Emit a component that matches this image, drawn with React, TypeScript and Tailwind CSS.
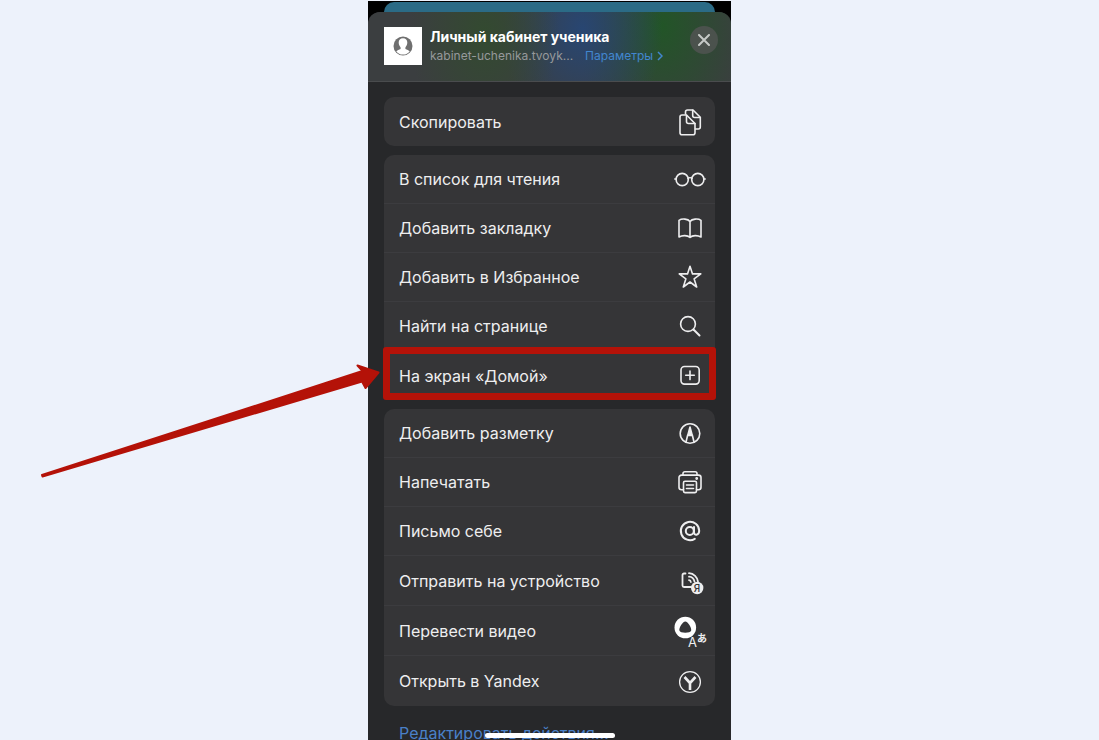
import type { ReactNode } from "react";

type Action = {
	label: string;
	icon: ReactNode;
	tall?: boolean;
	marked?: boolean;
};

function Icon({ children }: { children: ReactNode }) {
	return (
		<svg
			width="32"
			height="32"
			viewBox="0 0 32 32"
			fill="none"
			stroke="currentColor"
			strokeWidth="1.6"
			strokeLinecap="round"
			strokeLinejoin="round"
			className="shrink-0 overflow-visible"
			aria-hidden="true"
		>
			{children}
		</svg>
	);
}

const copyActions: Action[] = [
	{
		label: "Скопировать",
		icon: (
			<Icon>
				<path d="M11.500 8V6a2 2 0 0 1 2-2H19l7.300 7.300V21a2 2 0 0 1-2 2H21.500" />
				<path d="M18.700 4.300V9.500a2 2 0 0 0 2 2H26" />
				<path d="M8 9h4.500l8.500 8.500V26.800a2 2 0 0 1-2 2H8a2 2 0 0 1-2-2V11a2 2 0 0 1 2-2z" />
				<path d="M12.500 9.300V15.500a2 2 0 0 0 2 2H21" />
			</Icon>
		),
	},
];

const pageActions: Action[] = [
	{
		label: "В список для чтения",
		icon: (
			<Icon>
				<circle cx="8.200" cy="16.500" r="6.100" />
				<circle cx="23.800" cy="16.500" r="6.100" />
				<path d="M14 15.500c1-1 3-1 4 0M.8 16h1.300M29.900 16h1.300" />
			</Icon>
		),
	},
	{
		label: "Добавить закладку",
		icon: (
			<Icon>
				<path d="M16 9.500C14 6.800 8 6.300 5 8.300V25c3.500-2 8.500-1.800 11 .3 2.500-2.100 7.500-2.300 11-.3V8.300c-3-2-9-1.500-11 1.200zM16 9.500v15.500" />
			</Icon>
		),
	},
	{
		label: "Добавить в Избранное",
		icon: (
			<Icon>
				<path d="M16 5.200l2.500 7.700h8.300l-6.700 4.900 2.600 8.200-6.700-5-6.700 5 2.600-8.200-6.700-4.900h8.300z" />
			</Icon>
		),
	},
	{
		label: "Найти на странице",
		icon: (
			<Icon>
				<circle cx="14" cy="14" r="7.400" />
				<path d="M19.500 19.500l6 6" strokeWidth="2" />
			</Icon>
		),
	},
	{
		label: "На экран «Домой»",
		marked: true,
		icon: (
			<Icon>
				<rect x="7" y="6.500" width="18.200" height="17.600" rx="3.500" />
				<path d="M16 11v8.600M11.700 15.300h8.600" />
			</Icon>
		),
	},
];

const appActions: Action[] = [
	{
		label: "Добавить разметку",
		icon: (
			<Icon>
				<circle cx="16" cy="16.500" r="9.800" />
				<path d="M13.700 18L12 25M18.300 18L20 25M13.500 18.500h5" />
				<path d="M14 17.500L16 10l2 7.500z" fill="currentColor" />
			</Icon>
		),
	},
	{
		label: "Напечатать",
		icon: (
			<Icon>
				<path d="M9 9V7.500A1.800 1.800 0 0 1 10.800 5.700h10.400A1.800 1.800 0 0 1 23 7.500V9" />
				<path d="M9.500 23.800H7.500a2.500 2.500 0 0 1-2.500-2.500v-9.700a2.500 2.500 0 0 1 2.500-2.500h17a2.500 2.500 0 0 1 2.500 2.500v9.700a2.500 2.500 0 0 1-2.500 2.500h-2" />
				<rect x="9.500" y="15.300" width="13" height="11.300" rx="1.500" />
				<path d="M12.500 19h7M12.500 22.500h7" />
				<circle cx="22.700" cy="12.500" r=".6" fill="currentColor" />
			</Icon>
		),
	},
	{
		label: "Письмо себе",
		icon: (
			<Icon>
				<g strokeWidth="2">
					<circle cx="15.800" cy="16" r="4" />
					<path d="M20 12v5.200c0 3.800 5.200 3.200 5.200-1.400a9.200 9.200 0 1 0-4.400 8" />
				</g>
			</Icon>
		),
	},
	{
		label: "Отправить на устройство",
		tall: true,
		icon: (
			<Icon>
				<path d="M11.500 8.500H10A1.500 1.500 0 0 0 8.500 10v10.500A1.500 1.500 0 0 0 10 22h7" strokeWidth="1.800" />
				<path d="M15 8.200a9.500 9.500 0 0 1 9 8.500M15 11.700a6 6 0 0 1 5.500 5M15 15.200a2 2 0 0 1 1.800 1.800" strokeWidth="1.800" />
				<circle cx="23.200" cy="23" r="6.200" fill="currentColor" stroke="none" />
				<text
					x="23"
					y="26.500"
					textAnchor="middle"
					fill="#353537"
					stroke="none"
					className="font-['Inter'] text-[10px] font-medium"
				>
					Я
				</text>
			</Icon>
		),
	},
	{
		label: "Перевести видео",
		tall: true,
		icon: (
			<Icon>
				<circle cx="11.300" cy="12.500" r="10.800" fill="#fff" stroke="none" />
				<path
					d="M11.300 6.500c2.600 0 6.500 6.500 5.900 9-.6 3-11.200 3-11.800 0-.6-2.500 3.300-9 5.900-9z"
					fill="#353537"
					stroke="none"
				/>
				<g fill="currentColor" stroke="none">
					<text x="14" y="32" className="font-['Inter'] text-[13px]">
						A
					</text>
					<text x="23" y="27" className="font-['Noto_Sans_CJK_JP',sans-serif] text-[10px] font-bold">
						あ
					</text>
				</g>
			</Icon>
		),
	},
	{
		label: "Открыть в Yandex",
		tall: true,
		icon: (
			<Icon>
				<circle cx="16" cy="17" r="10.400" strokeWidth="1.300" />
				<path d="M10.500 12l5.500 6 5.500-6M16 18v7" strokeWidth="2.600" strokeLinecap="butt" />
			</Icon>
		),
	},
];

// hand-drawn pointer, its tip ends just before the marked row
function Pointer() {
	return (
		<svg
			width="340"
			height="120"
			viewBox="0 0 340 120"
			className="pointer-events-none absolute right-full top-2 mr-1 max-w-none"
			aria-hidden="true"
		>
			<path
				d="M2 116L322.500 12L317.500 6.500L338.500 13.500L325.500 29L322 22.500L2.500 117.500Z"
				fill="#b41208"
				stroke="#b41208"
				strokeWidth="2"
				strokeLinejoin="round"
			/>
		</svg>
	);
}

function ActionGroup({ actions }: { actions: Action[] }) {
	return (
		<ul className="divide-y divide-[#3c3c3f] rounded-[10px] bg-[#353537]">
			{actions.map((action) => (
				<li key={action.label} className={`relative ${action.tall ? "h-[50px]" : "h-[49px]"}`}>
					<button className="flex h-full w-full items-center justify-between pl-[15px] pr-[9px] text-left">
						<span>{action.label}</span>
						{action.icon}
					</button>
					{action.marked && (
						<>
							<span className="pointer-events-none absolute -inset-x-px -top-1 bottom-0 rounded-[3px] border-[7px] border-[#b41208]" />
							<Pointer />
						</>
					)}
				</li>
			))}
		</ul>
	);
}

export default function App() {
	return (
		<main className="relative h-screen overflow-hidden bg-[#edf2fb] pt-px font-['Inter',sans-serif]">
			<div className="mx-auto flex h-full max-w-[363px] flex-col bg-black">
				<div className="mx-4 mt-px h-[10px] shrink-0 rounded-t-[10px] bg-[#2b6b86]" />
				<section className="grow rounded-t-xl bg-[#27282a] text-base text-[#eeeeef]">
					<header className="flex h-[70px] items-start rounded-t-xl border-b border-[#4a4c4e] bg-[#3b3e40] bg-[radial-gradient(75px_110px_at_32%_30%,#334a30,transparent),radial-gradient(80px_110px_at_59%_25%,#284672,transparent),radial-gradient(85px_120px_at_81%_20%,#225527,transparent)] px-4 pt-[15px]">
						<div className="flex size-[38px] shrink-0 items-center justify-center bg-white">
							<svg width="20" height="20" viewBox="0 0 20 20" aria-hidden="true">
								<circle cx="10" cy="10" r="9.500" fill="#6f6f6f" />
								<path
									d="M10 2.200c2.800 0 4.300 1.800 4.300 4.400 0 2-.9 3.700-1.900 4.800v1.600c1.500.9 3.500 1.200 4.300 2.400A8.300 8.300 0 0 1 10 18.500a8.300 8.300 0 0 1-6.700-3.100c.8-1.200 2.800-1.500 4.300-2.400v-1.600C6.600 10.300 5.700 8.600 5.700 6.600c0-2.600 1.500-4.400 4.300-4.400z"
									fill="#fff"
								/>
							</svg>
						</div>
						<div className="ml-2 min-w-0 grow">
							<h1 className="truncate text-sm font-bold leading-5 text-white">Личный кабинет ученика</h1>
							<p className="flex text-xs leading-[18px] text-[#96999b]">
								<span>kabinet-uchenika.tvoyk...</span>
								<a href="#options" className="ml-3 flex items-center text-[#4286cf]">
									Параметры
									<svg
										width="6"
										height="10"
										viewBox="0 0 6 10"
										fill="none"
										stroke="currentColor"
										strokeWidth="1.500"
										className="ml-1"
										aria-hidden="true"
									>
										<path d="M1 1l4 4-4 4" />
									</svg>
								</a>
							</p>
						</div>
						<button
							aria-label="Закрыть"
							className="-mr-[3px] -mt-px flex size-7 shrink-0 items-center justify-center rounded-full bg-[#4b524d] text-[#c6c9c7]"
						>
							<svg
								width="12"
								height="12"
								viewBox="0 0 12 12"
								stroke="currentColor"
								strokeWidth="2"
								strokeLinecap="round"
								aria-hidden="true"
							>
								<path d="M1 1l10 10M11 1L1 11" />
							</svg>
						</button>
					</header>
					<div className="flex flex-col gap-[9px] px-4 pt-[15px]">
						<ActionGroup actions={copyActions} />
						<ActionGroup actions={pageActions} />
						<ActionGroup actions={appActions} />
						<a href="#edit" className="flex h-9 items-center pl-[15px] text-[#4a80c8]">
							Редактировать действия...
						</a>
					</div>
				</section>
			</div>
			<div className="absolute bottom-[2px] left-1/2 h-[5px] w-[130px] -translate-x-1/2 rounded-full bg-white" />
		</main>
	);
}
